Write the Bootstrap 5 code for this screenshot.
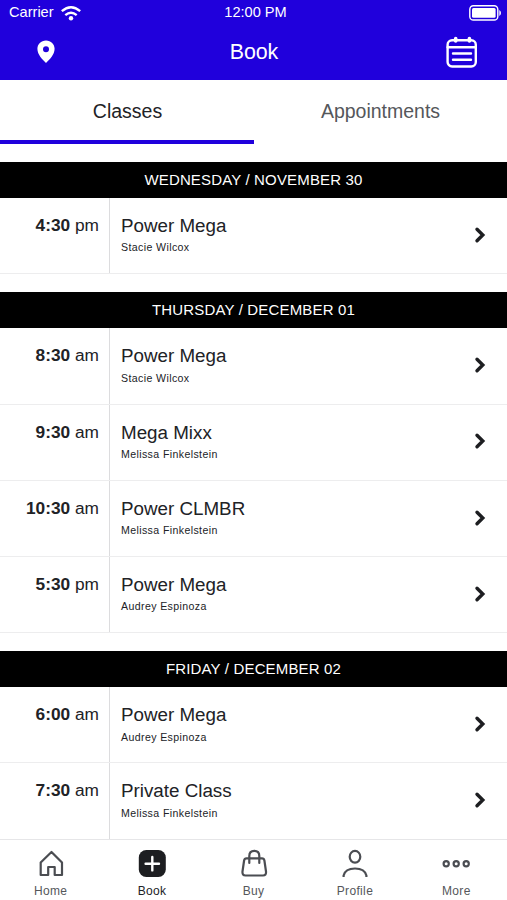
<!DOCTYPE html>
<html lang="en">
<head>
<meta charset="utf-8">
<meta name="viewport" content="width=device-width, initial-scale=1">
<title>Book</title>
<link href="https://cdn.jsdelivr.net/npm/bootstrap@5.3.0/dist/css/bootstrap.min.css" rel="stylesheet">
<style>
body{font-family:"Liberation Sans",Arial,sans-serif;color:#212226;height:900px;overflow:hidden;line-height:1.2}
svg{display:block;flex:none}
.app-head{background:#2000dc;height:80px}
.status{height:25px;font-size:14.6px;padding:0 5px 0 3px}
.status .side:first-child{padding-left:6px}
.status svg.wifi{margin-left:7px}
.title-row{height:54px;padding:0 30px 0 31px}
.title-row .pin{margin-left:5px}
.title-row h1{font-size:21.4px;line-height:24px;letter-spacing:-.1px;margin:0 0 1px}
.side{flex:1 1 0}
.switch{height:64px}
.switch .nav-link{font-size:19.5px;color:#55575b;padding:4px 0 0;border-bottom:4px solid transparent;border-radius:0;height:64px}
.switch .nav-link.active{color:#212226;border-color:#2000dc;padding-left:1px}
.day{margin-top:18.1px}
.day-title{height:36px;font-size:15px;letter-spacing:.16px;font-weight:400;background:#000}
.slot{height:76.2px;border-bottom:1px solid #ededee}
.time{width:110px;border-right:1px solid #dcdcde;padding:16px 10px 0 0;font-size:17.3px;line-height:22px}
.info{padding:16px 0 0 11px}
.info h3{font-size:18.8px;line-height:24px;font-weight:400}
.info p{font-size:10.6px;line-height:14px;letter-spacing:.38px;margin-top:2.3px}
.go{padding:0 20px 1.4px 0}
.tabs{height:61px;border-top:1px solid #e6e6e8;font-size:12px;letter-spacing:.35px}
.tabs a{color:#55575b;padding-top:9px}
.tabs a.on{color:#212226}
.tabs span{line-height:16px;margin:4px 0 0}
</style>
</head>
<body class="d-flex flex-column bg-white">
<header class="app-head text-white flex-shrink-0">
  <div class="status d-flex align-items-center">
    <div class="side d-flex align-items-center">Carrier
      <svg class="wifi" width="20" height="16" viewBox="0 0 20 16" fill="none" stroke="#fff" stroke-width="2.300"><path d="M.8 6.200Q10-1.800 19.200 6.200M4.300 10.200Q10 5.300 15.700 10.200"/><circle cx="10" cy="13.200" r="2.200" fill="#fff" stroke="none"/></svg>
    </div>
    <div>12:00 PM</div>
    <div class="side d-flex justify-content-end">
      <svg width="34" height="16" viewBox="0 0 34 16"><rect x="1.800" y=".8" width="28" height="14.200" rx="3.600" fill="none" stroke="#fff" stroke-width="1.400"/><rect x="4" y="3" width="23.600" height="9.800" rx="1.500" fill="#fff"/><path d="M31.300 5Q33 6 33 8T31.300 11Z" fill="#fff"/></svg>
    </div>
  </div>
  <div class="title-row d-flex align-items-center">
    <div class="side">
      <svg class="pin" width="20" height="24" viewBox="0 0 20 24"><path fill="#fff" fill-rule="evenodd" d="M10 .4C5 .4 1.400 4 1.400 8.800 1.400 14.500 6.300 19.600 10 23 13.700 19.600 18.600 14.500 18.600 8.800 18.600 4 15 .4 10 .4ZM10 6.300a3 3 0 1 1 0 6 3 3 0 0 1 0-6Z"/></svg>
    </div>
    <h1 class="fw-normal">Book</h1>
    <div class="side d-flex justify-content-end">
      <svg width="32" height="32" viewBox="0 0 32 32" fill="none" stroke="#fff" stroke-width="2.400" stroke-linecap="round"><rect x="2.600" y="4.300" width="28.200" height="26.200" rx="4.500"/><path d="M2.600 11.200H30.500M8 17.500H26M8 23.800H26"/><path d="M10.700 2.500V5M24.400 2.500V5" stroke-width="3.600"/></svg>
    </div>
  </div>
</header>
<nav class="switch nav nav-justified flex-shrink-0">
  <a class="nav-link active d-flex align-items-center justify-content-center">Classes</a>
  <a class="nav-link d-flex align-items-center justify-content-center">Appointments</a>
</nav>
<main id="schedule" class="flex-grow-1 overflow-hidden"></main>
<footer class="tabs d-flex flex-shrink-0 bg-white">
  <a class="side d-flex flex-column align-items-center text-decoration-none"><svg width="28" height="30" viewBox="0 0 28 30" fill="none" stroke="#4b4d52" stroke-width="2.200" stroke-linejoin="round"><path d="M3.700 13.500 14.500 3 25 13.500V26H17.700V18H11.200V26H3.700Z"/></svg><span>Home</span></a>
  <a class="side on d-flex flex-column align-items-center text-decoration-none"><svg width="28" height="30" viewBox="0 0 28 30"><rect x=".8" y="1" width="27" height="27" rx="7.500" fill="#1d1e21"/><path d="M14.300 8V21.400M7.600 14.700H21" stroke="#fff" stroke-width="2.400" stroke-linecap="round"/></svg><span>Book</span></a>
  <a class="side d-flex flex-column align-items-center text-decoration-none"><svg width="28" height="30" viewBox="0 0 28 30" fill="none" stroke="#4b4d52" stroke-width="2.200" stroke-linecap="round" stroke-linejoin="round"><path d="M6.500 9.300H22Q24 9.300 24.400 11.500L26 22.500Q26.400 26.500 23 26.500H5.500Q2.100 26.500 2.500 22.500L4.100 11.500Q4.500 9.300 6.500 9.300ZM9.300 14V7Q9.300 1.800 14.300 1.800T19.300 7V14"/></svg><span>Buy</span></a>
  <a class="side d-flex flex-column align-items-center text-decoration-none"><svg width="28" height="30" viewBox="0 0 28 30" fill="none" stroke="#4b4d52" stroke-width="2.200"><ellipse cx="14" cy="7.800" rx="5.300" ry="5.900"/><path d="M2.600 28V26.500C3.800 21.500 8.500 19.500 14 19.500S24.200 21.500 25.400 26.500V28"/></svg><span>Profile</span></a>
  <a class="side d-flex flex-column align-items-center text-decoration-none"><svg width="28" height="30" viewBox="0 0 28 30" fill="none" stroke="#4b4d52" stroke-width="2.200"><circle cx="4.200" cy="14.700" r="2.600"/><circle cx="14.200" cy="14.700" r="2.600"/><circle cx="24.200" cy="14.700" r="2.600"/></svg><span>More</span></a>
</footer>
<script src="https://cdn.jsdelivr.net/npm/bootstrap@5.3.0/dist/js/bootstrap.bundle.min.js"></script>
<script>
const days = [
  ["WEDNESDAY / NOVEMBER 30", [["4:30","pm","Power Mega","Stacie Wilcox"]]],
  ["THURSDAY / DECEMBER 01", [["8:30","am","Power Mega","Stacie Wilcox"],["9:30","am","Mega Mixx","Melissa Finkelstein"],["10:30","am","Power CLMBR","Melissa Finkelstein"],["5:30","pm","Power Mega","Audrey Espinoza"]]],
  ["FRIDAY / DECEMBER 02", [["6:00","am","Power Mega","Audrey Espinoza"],["7:30","am","Private Class","Melissa Finkelstein"]]]
];
document.getElementById("schedule").innerHTML = days.map(([day, slots]) => `
<section class="day">
  <h2 class="day-title d-flex align-items-center justify-content-center text-white mb-0">${day}</h2>
  ${slots.map(([t, ap, name, who]) => `
  <div class="slot d-flex">
    <div class="time text-end flex-shrink-0"><b>${t}</b> ${ap}</div>
    <div class="info flex-grow-1"><h3 class="mb-0">${name}</h3><p class="mb-0">${who}</p></div>
    <div class="go d-flex align-items-center"><svg width="14" height="18" viewBox="0 0 14 18" fill="none" stroke="#1d1e21" stroke-width="3.400" stroke-linecap="round"><path d="M4 3.200 9.800 9 4 14.800"/></svg></div>
  </div>`).join("")}
</section>`).join("");
</script>
</body>
</html>
